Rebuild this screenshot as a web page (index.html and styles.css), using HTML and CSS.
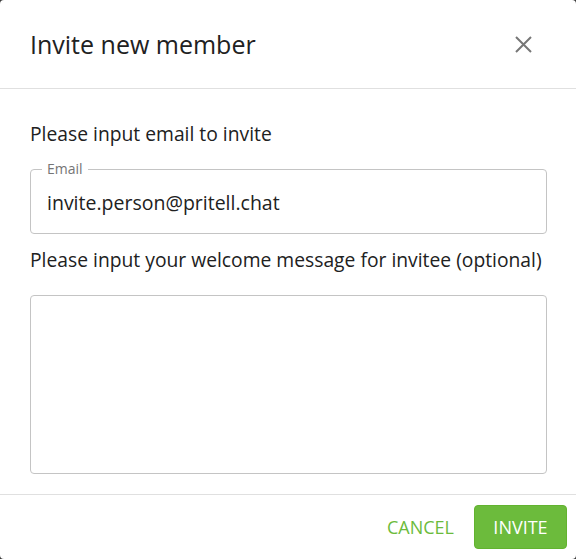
FILE: index.html
```html
<!DOCTYPE html>
<html lang="en">
<head>
<meta charset="utf-8">
<title>Invite new member</title>
<link rel="stylesheet" href="styles.css">
</head>
<body>
<div class="dialog">
  <header class="header">
    <h2 class="title">Invite new member</h2>
    <button class="close" aria-label="Close">
      <svg width="17" height="17" viewBox="0 0 17 17"><path d="M1 1L16 16M16 1L1 16" stroke="#777" stroke-width="2" fill="none"/></svg>
    </button>
  </header>
  <main class="content">
    <p class="prompt first">Please input email to invite</p>
    <fieldset class="field">
      <legend class="legend">Email</legend>
      <div class="value">invite.person@pritell.chat</div>
    </fieldset>
    <p class="prompt second">Please input your welcome message for invitee (optional)</p>
    <div class="textarea"></div>
  </main>
  <footer class="footer">
    <button class="btn cancel">CANCEL</button>
    <button class="btn invite">INVITE</button>
  </footer>
</div>
</body>
</html>
```
FILE: styles.css
```css
html, body {
  margin: 0;
  padding: 0;
  background: #3a3a3a;
}
body {
  font-family: "Open Sans", "Liberation Sans", sans-serif;
  color: #212121;
}
.dialog {
  width: 576px;
  height: 559px;
  background: #fff;
  border-radius: 4px;
  display: flex;
  flex-direction: column;
  box-sizing: border-box;
}
.header {
  height: 89px;
  flex: none;
  box-sizing: border-box;
  padding: 0 44px 0 30px;
  display: flex;
  align-items: center;
  justify-content: space-between;
  border-bottom: 1px solid #e0e0e0;
}
.title {
  margin: 0;
  font-size: 25px;
  font-weight: 400;
  line-height: 30px;
}
.close {
  border: 0;
  background: none;
  padding: 0;
  width: 17px;
  height: 17px;
  display: flex;
}
.content {
  flex: 1;
  padding: 0 29px 0 30px;
  display: flex;
  flex-direction: column;
}
.prompt {
  margin: 0;
  font-size: 19.3px;
  line-height: 24px;
  white-space: nowrap;
}
.prompt.first {
  margin-top: 33px;
}
.field {
  margin: 15px 0 0;
  padding: 0 16px 18px;
  border: 1px solid #c4c4c4;
  border-radius: 4px;
}
.legend {
  margin-left: -5px;
  padding: 0 5px;
  font-size: 14px;
  line-height: 16px;
  color: #757575;
}
.value {
  font-size: 19.5px;
  line-height: 24px;
  padding-top: 14px;
}
.prompt.second {
  margin-top: 14px;
}
.textarea {
  margin-top: 23px;
  height: 179px;
  box-sizing: border-box;
  border: 1px solid #c4c4c4;
  border-radius: 4px;
}
.footer {
  height: 65px;
  flex: none;
  box-sizing: border-box;
  border-top: 1px solid #e0e0e0;
  display: flex;
  justify-content: flex-end;
  align-items: center;
  padding: 0 9px 0 0;
}
.btn {
  font-family: "Open Sans", "Liberation Sans", sans-serif;
  font-size: 18px;
  font-weight: 500;
  border: 0;
  border-radius: 4px;
  height: 44px;
  padding: 0 20px;
  cursor: pointer;
}
.cancel {
  background: none;
  color: #6cbb3c;
}
.invite {
  background: #6cbb3c;
  color: #fff;
  width: 93px;
  padding: 0;
  border: 1px solid #62b32f;
}
```
